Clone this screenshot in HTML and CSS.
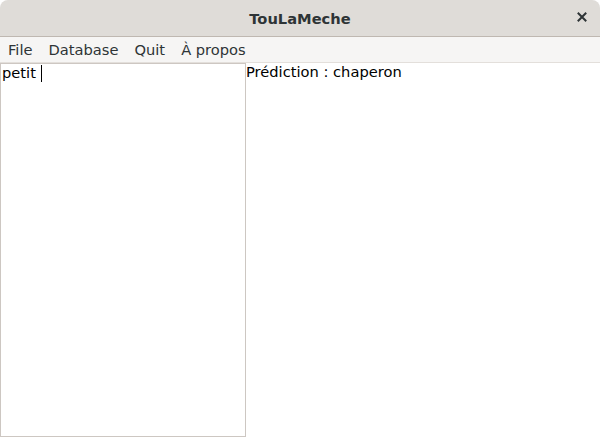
FILE: index.html
```html
<!DOCTYPE html>
<html>
<head>
<meta charset="utf-8">
<link rel="stylesheet" href="styles.css">
</head>
<body>
<div class="window">
  <div class="titlebar">
    <div class="title">TouLaMeche</div>
    <svg class="close" width="10" height="10" viewBox="0 0 10 10"><path d="M1.5 1.5 L8.5 8.5 M8.5 1.5 L1.5 8.5" stroke="#2e3436" stroke-width="2" stroke-linecap="square"/></svg>
  </div>
  <div class="menubar">
    <span class="menu-item">File</span>
    <span class="menu-item">Database</span>
    <span class="menu-item">Quit</span>
    <span class="menu-item">À propos</span>
  </div>
  <div class="content">
    <div class="editor"><span class="text">petit </span><span class="caret"></span></div>
    <div class="prediction">Prédiction : chaperon</div>
  </div>
</div>
</body>
</html>
```
FILE: styles.css
```css
html, body {
  margin: 0;
  padding: 0;
  background: #ffffff;
  width: 600px;
  height: 437px;
  overflow: hidden;
}
.window {
  font-family: "DejaVu Sans", sans-serif;
  font-size: 14.67px;
  width: 600px;
  height: 437px;
  display: flex;
  flex-direction: column;
}
.titlebar {
  height: 36px;
  flex: none;
  background: #dfdcd8;
  border-bottom: 1px solid #bfb8b1;
  border-radius: 8px 8px 0 0;
  display: flex;
  align-items: center;
  justify-content: center;
  position: relative;
  color: #2e3436;
}
.title {
  font-weight: bold;
  font-size: 14.67px;
}
.close {
  position: absolute;
  right: 13px;
  top: 12px;
}
.menubar {
  height: 25px;
  flex: none;
  background: #f6f5f4;
  border-bottom: 1px solid #e3dfdb;
  display: flex;
  align-items: center;
  padding-left: 8px;
  gap: 16px;
  color: #2e3436;
}
.content {
  flex: 1;
  display: flex;
  min-height: 0;
}
.editor {
  flex: none;
  width: 246px;
  box-sizing: border-box;
  border: 1px solid #cdc7c2;
  background: #fff;
  color: #000;
  padding: 0 1px;
  display: flex;
  align-items: flex-start;
}
.text {
  white-space: pre;
  line-height: 17px;
}
.caret {
  display: inline-block;
  width: 1px;
  height: 17px;
  background: #000;
  margin-top: 1px;
}
.prediction {
  color: #000;
  padding: 0;
  line-height: 17px;
}
```
